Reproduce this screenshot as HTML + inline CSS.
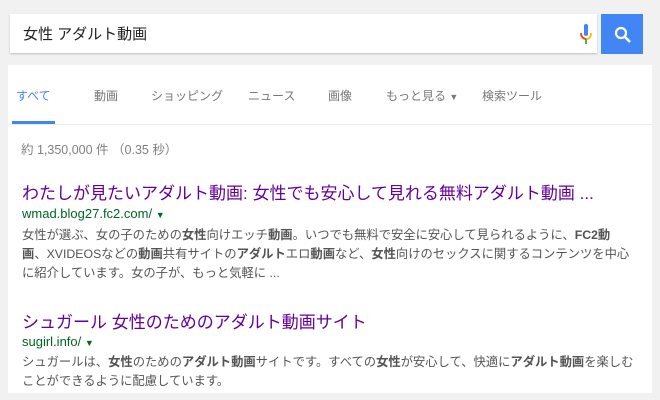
<!DOCTYPE html><html><head><meta charset="utf-8"><style>
body{margin:0;width:660px;height:400px;background:#f1f1f1;font-family:"Liberation Sans","Noto Sans CJK JP",sans-serif;position:relative;overflow:hidden}
.a{position:absolute;white-space:nowrap}
.box{left:10px;top:14px;width:587px;height:39px;background:#fff;box-shadow:0 1px 2px rgba(0,0,0,.2)}
.btn{left:601px;top:14px;width:42px;height:40px;background:#4285f4}
.panel{left:8px;top:65px;width:644px;height:328px;background:#fff}
.tab{top:87px;font-size:12px;color:#777}
.t{font-size:17px;color:#660099}
.u{font-size:13px;color:#006621}
.s{font-size:12.3px;color:#545454;line-height:19px}
</style></head><body>
<div class="a box"></div>
<div class="a" style="left:23px;top:23px;font-size:15px;color:#222">女性 アダルト動画</div>
<svg class="a" style="left:579px;top:23px" width="14" height="24" viewBox="0 0 14 24"><rect x="5" y="1" width="4" height="12" rx="2" fill="#4285f4"/><path d="M2 10q0 6 5 6q5 0 5-6" stroke="#fbbc05" stroke-width="1.8" fill="none"/><path d="M7 16v5" stroke="#34a853" stroke-width="1.8"/><path d="M2 10q0 5 5 6" stroke="#ea4335" stroke-width="1.8" fill="none"/></svg>
<div class="a btn"></div>
<svg class="a" style="left:614px;top:26px" width="18" height="18" viewBox="0 0 18 18"><circle cx="7" cy="7" r="5" stroke="#fff" stroke-width="2.2" fill="none"/><path d="M10.5 10.5L16 16" stroke="#fff" stroke-width="2.6"/></svg>
<div class="a panel"></div>
<div class="a tab" style="left:16px;color:#4285f4">すべて</div>
<div class="a tab" style="left:94px">動画</div>
<div class="a tab" style="left:151px">ショッピング</div>
<div class="a tab" style="left:248px">ニュース</div>
<div class="a tab" style="left:328px">画像</div>
<div class="a tab" style="left:386px">もっと見る <span style="font-size:9px">▼</span></div>
<div class="a tab" style="left:482px">検索ツール</div>
<div class="a" style="left:12px;top:121px;width:43px;height:3px;background:#4285f4"></div>
<div class="a" style="left:8px;top:124px;width:644px;height:1px;background:#ebebeb"></div>
<div class="a" style="left:21px;top:139px;font-size:12.5px;color:#808080">約 1,350,000 件 （0.35 秒）</div>
<div class="a t" style="left:22px;top:179px">わたしが見たいアダルト動画: 女性でも安心して見れる無料アダルト動画 ...</div>
<div class="a u" style="left:22px;top:206px">wmad.blog27.fc2.com/ <span style="font-size:9px">▼</span></div>
<div class="a s" style="left:22px;top:226px">女性が選ぶ、女の子のための<b>女性</b>向けエッチ<b>動画</b>。いつでも無料で安全に安心して見られるように、<b>FC2動</b><br><b>画</b>、XVIDEOSなどの<b>動画</b>共有サイトの<b>アダルト</b>エロ<b>動画</b>など、<b>女性</b>向けのセックスに関するコンテンツを中心<br>に紹介しています。女の子が、もっと気軽に ...</div>
<div class="a t" style="left:22px;top:308px">シュガール 女性のためのアダルト動画サイト</div>
<div class="a u" style="left:22px;top:334px">sugirl.info/ <span style="font-size:9px">▼</span></div>
<div class="a s" style="left:22px;top:353px">シュガールは、<b>女性</b>のための<b>アダルト動画</b>サイトです。すべての<b>女性</b>が安心して、快適に<b>アダルト動画</b>を楽しむ<br>ことができるように配慮しています。</div>
</body></html>
